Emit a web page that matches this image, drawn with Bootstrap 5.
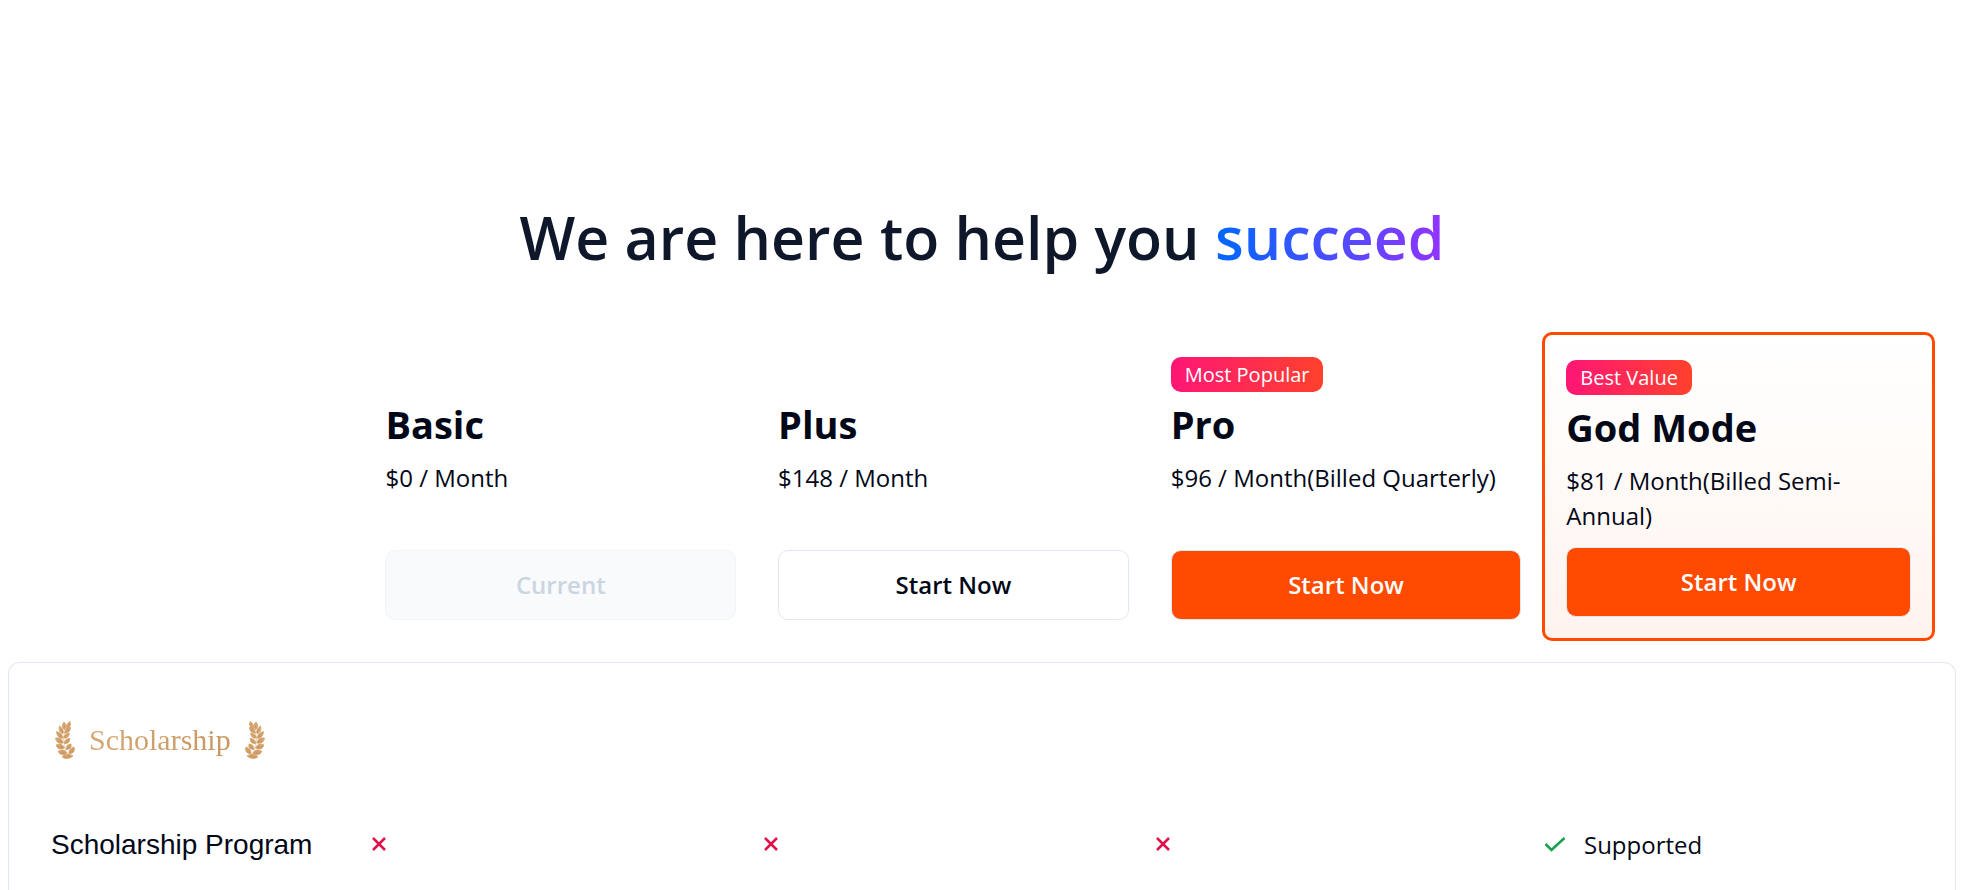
<!DOCTYPE html>
<html lang="en">
<head>
<meta charset="utf-8">
<meta name="viewport" content="width=device-width, initial-scale=1">
<title>Pricing</title>
<link href="https://cdn.jsdelivr.net/npm/bootstrap@5.3.0/dist/css/bootstrap.min.css" rel="stylesheet">
<style>
  body { font-family: "Segoe UI", "Open Sans", "Noto Sans", sans-serif; font-size: 24px; line-height: 35px; color: #020817; padding: 0 24px 0 8px; }
  .headline { font-size: 59px; line-height: 72px; font-weight: 600; color: #0f172a; margin: 201px 0 59px; }
  .headline span { background: linear-gradient(90deg, #0068ff, #9333ff); -webkit-background-clip: text; background-clip: text; color: transparent; }
  .plans { display: grid; grid-template-columns: 17.6% repeat(4, 20.6%); margin: 0 21px 21px; }
  .plan { padding: 25px 21px 21px; border-radius: 10px; min-height: 309px; }
  .plan-best { border: 3px solid #ff4a00; background: linear-gradient(#fff, #fffaf7 50%, #fff3ee); }
  .tag { height: 35px; line-height: 36px; font-size: 20px; color: #fff; padding: 0 14px; border-radius: 10px; background: linear-gradient(90deg, #ff1676, #ff412c); }
  .plan h2 { font-size: 38px; line-height: 48px; font-weight: 700; margin: 8px 0 12px; }
  .btn-plan { height: 70px; font-size: 24px; font-weight: 600; border: 1px solid #e2e8f0; border-radius: 10px; color: #020817; background: #fff; }
  .btn-plan:disabled { color: #cbd5e1; background: #f8fafc; border-color: #f1f5f9; opacity: 1; }
  .btn-fill, .btn-fill:hover { background: #ff4a00; color: #fff; }
  .features { border: 1px solid #e2e8f0; border-bottom: 0; border-radius: 12px 12px 0 0; padding: 42px 23px 0 20px; }
  .features table { table-layout: fixed; }
  .features td { padding: 0 2px; height: 138px; vertical-align: middle; }
  .features th { padding: 0 22px; font: 28px/35px "Liberation Sans", Arial, sans-serif; white-space: nowrap; vertical-align: middle; }
  .features .group-row th { height: 70px; }
  .scholar { font: 30px/40px "Liberation Serif", serif; margin: 0 14px; background: linear-gradient(100deg, #d6a873, #c8955f); -webkit-background-clip: text; background-clip: text; color: transparent; }
</style>
</head>
<body class="d-flex flex-column min-vh-100">
<svg width="0" height="0" class="position-absolute" aria-hidden="true">
  <defs>
    <linearGradient id="gold" x1="0" y1="0" x2="1" y2="1"><stop offset="0" stop-color="#dbae78"/><stop offset="1" stop-color="#c68f56"/></linearGradient>
    <symbol id="laurel" viewBox="0 0 20 38">
      <path d="M14 4C8 11 6 21 13 34" fill="none" stroke="#e3c5a0" stroke-width=".8"/>
      <g fill="url(#gold)" stroke="#d3a26c" stroke-width=".7" stroke-linejoin="round">
        <path d="M15 .5Q17 5 11.500 8Q10.500 3 15 .5Z"/>
        <path d="M9 1Q12.500 4 9.500 9Q5.500 5 9 1Z"/>
        <path d="M15.500 6Q15.500 12 9.500 12Q10 7 15.500 6Z"/>
        <path d="M4.500 5Q9.500 8 8 13Q2.500 10 4.500 5Z"/>
        <path d="M14.500 12Q13.500 18 8.500 17Q9 12.500 14.500 12Z"/>
        <path d="M1.500 10.500Q8 12 7.500 17.500Q1.500 16.500 1.500 10.500Z"/>
        <path d="M15 17.500Q14.500 23.500 9 22.500Q10 17 15 17.500Z"/>
        <path d="M.5 17Q7 16 8 22Q1.500 23.500 .5 17Z"/>
        <path d="M16 23Q17.500 28.500 11 28.500Q11 23 16 23Z"/>
        <path d="M1 24Q6.500 21 9.500 27Q3 30 1 24Z"/>
        <path d="M19 26Q21 32 14 33Q13 28 19 26Z"/>
        <path d="M3 30.500Q8 26.500 12 32Q6 36 3 30.500Z"/>
        <path d="M7 36Q11 30.500 18 35Q12 39.500 7 36Z"/>
      </g>
    </symbol>
    <symbol id="cross" viewBox="0 0 26 26"><path d="M7 7L19 19M19 7L7 19" fill="none" stroke="#e11048" stroke-width="2.500"/></symbol>
    <symbol id="tick" viewBox="0 0 26 26"><path d="M3.500 13L9.500 19L22.500 7" fill="none" stroke="#16a34a" stroke-width="2.500"/></symbol>
  </defs>
</svg>

<h1 class="headline text-center">We are here to help you <span>succeed</span></h1>

<section class="plans">
  <div></div>
  <div class="plan d-flex flex-column align-items-start">
    <div class="tag invisible">Basic</div>
    <h2>Basic</h2>
    <div>$0 / Month</div>
    <button type="button" class="btn btn-plan w-100 mt-auto" disabled>Current</button>
  </div>
  <div class="plan d-flex flex-column align-items-start">
    <div class="tag invisible">Plus</div>
    <h2>Plus</h2>
    <div>$148 / Month</div>
    <button type="button" class="btn btn-plan w-100 mt-auto">Start Now</button>
  </div>
  <div class="plan d-flex flex-column align-items-start">
    <div class="tag">Most Popular</div>
    <h2>Pro</h2>
    <div>$96 / Month(Billed Quarterly)</div>
    <button type="button" class="btn btn-plan btn-fill w-100 mt-auto">Start Now</button>
  </div>
  <div class="plan plan-best d-flex flex-column align-items-start">
    <div class="tag">Best Value</div>
    <h2>God Mode</h2>
    <div>$81 / Month(Billed Semi-Annual)</div>
    <button type="button" class="btn btn-plan btn-fill w-100 mt-auto">Start Now</button>
  </div>
</section>

<section class="features flex-grow-1">
  <table class="w-100">
    <colgroup><col style="width:17.6%"><col style="width:20.6%"><col style="width:20.6%"><col style="width:20.6%"><col style="width:20.6%"></colgroup>
    <tbody>
      <tr class="group-row">
        <th colspan="5" scope="colgroup">
          <div class="d-flex align-items-center ps-1">
            <svg width="20" height="38" aria-hidden="true"><use href="#laurel"/></svg>
            <span class="scholar">Scholarship</span>
            <svg width="20" height="38" aria-hidden="true"><use href="#laurel" transform="matrix(-1 0 0 1 20 0)"/></svg>
          </div>
        </th>
      </tr>
      <tr>
        <th scope="row">Scholarship Program</th>
        <td><svg class="d-block" width="26" height="26" role="img" aria-label="No"><use href="#cross"/></svg></td>
        <td><svg class="d-block" width="26" height="26" role="img" aria-label="No"><use href="#cross"/></svg></td>
        <td><svg class="d-block" width="26" height="26" role="img" aria-label="No"><use href="#cross"/></svg></td>
        <td><div class="d-flex align-items-center gap-3"><svg width="26" height="26" aria-hidden="true"><use href="#tick"/></svg>Supported</div></td>
      </tr>
    </tbody>
  </table>
</section>
<script src="https://cdn.jsdelivr.net/npm/bootstrap@5.3.0/dist/js/bootstrap.bundle.min.js"></script>
</body>
</html>
